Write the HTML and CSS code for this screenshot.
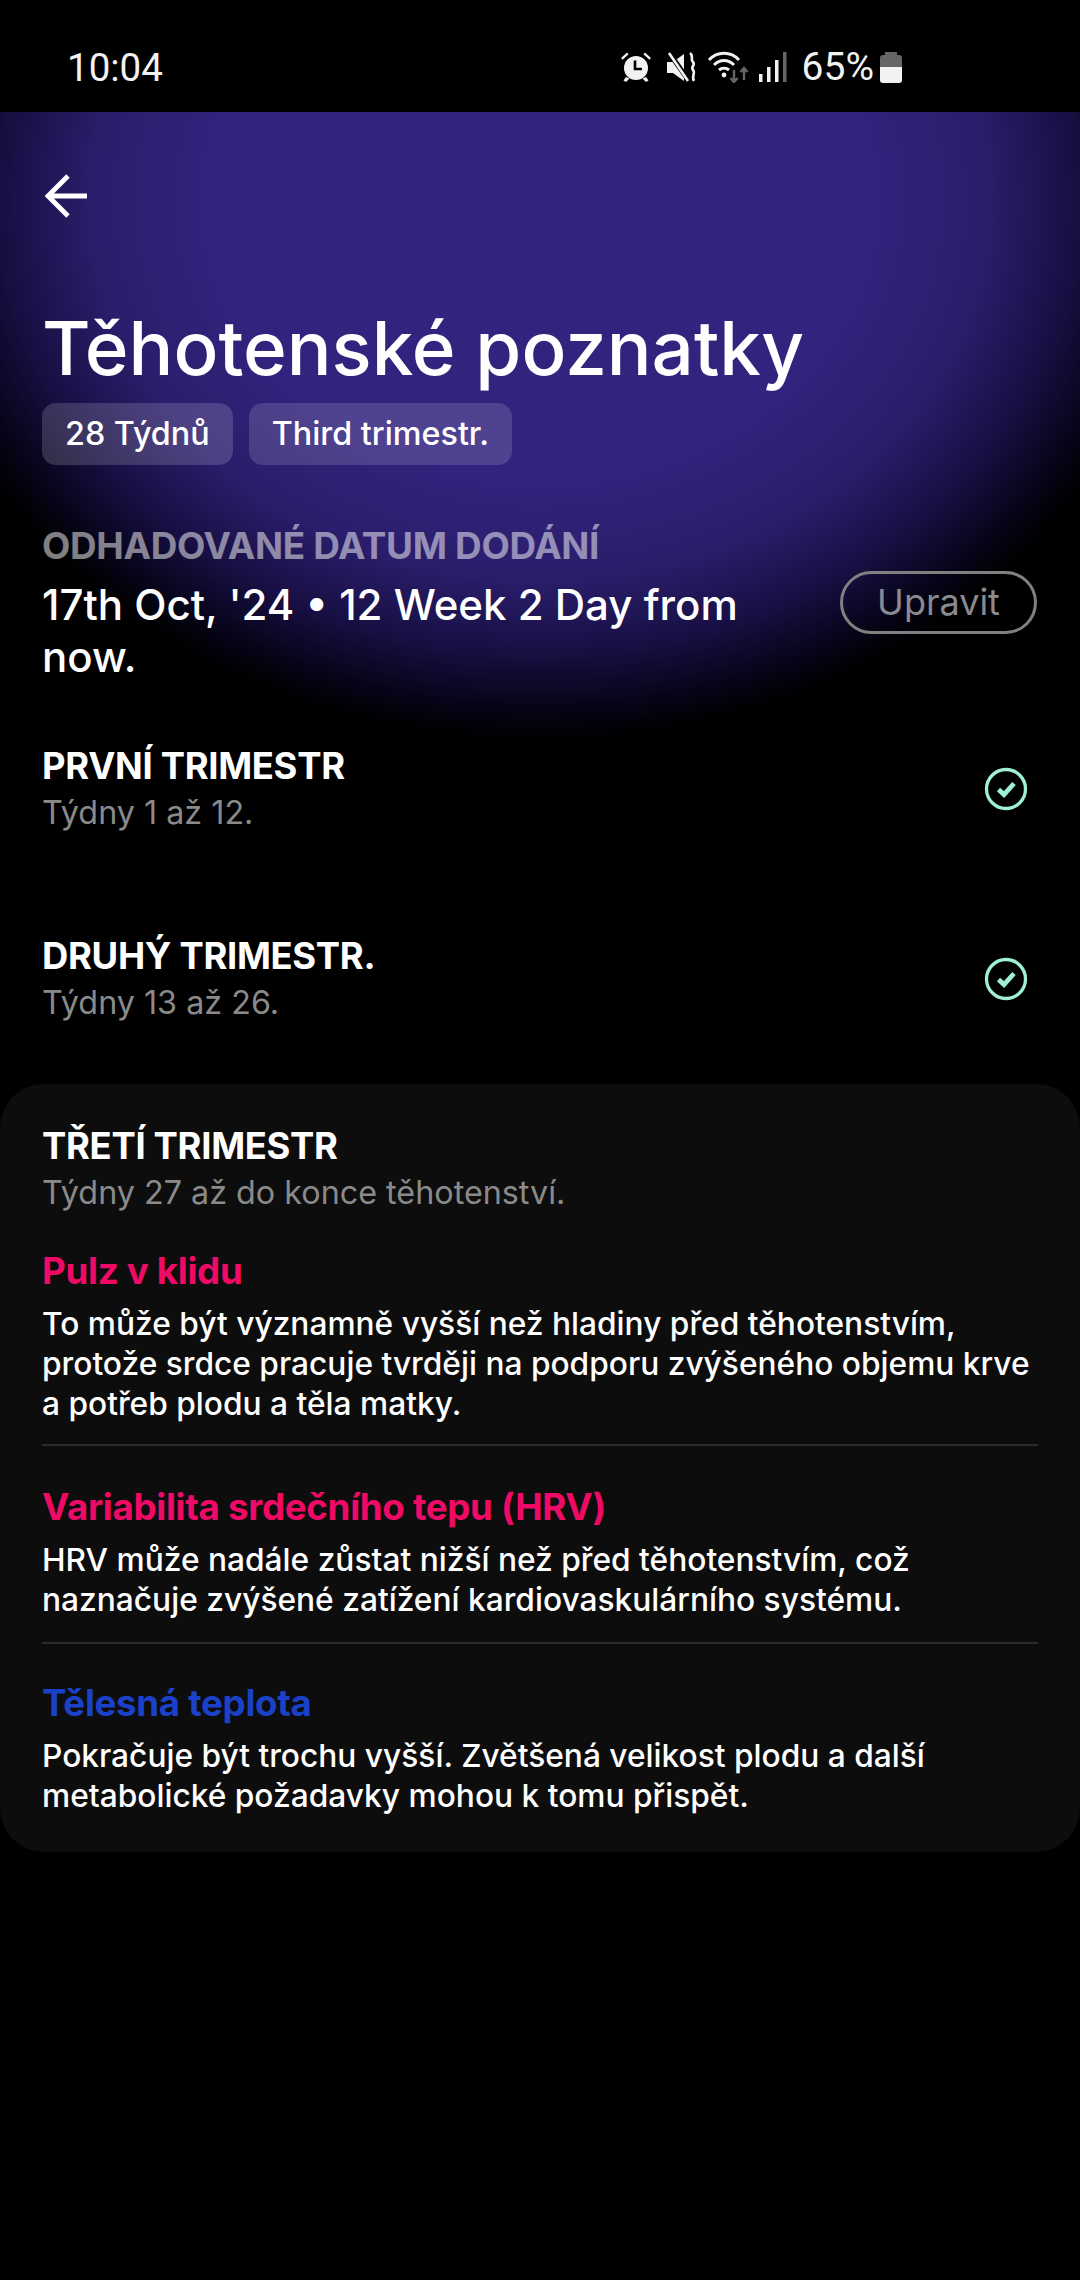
FILE: index.html
```html
<!DOCTYPE html>
<html lang="cs">
<head>
<meta charset="utf-8">
<title>Těhotenské poznatky</title>
<link rel="stylesheet" href="styles.css">
</head>
<body>
<div class="status">
  <span class="time">10:04</span>
  <div class="status-right">
    <svg class="ic ic-alarm" width="32" height="32" viewBox="0 0 32 32"><path d="M7 1.500 1 7l1.600 1.800 6-5.500zM25 1.500 31 7l-1.600 1.800-6-5.500z" fill="#f2f2f2"/><circle cx="16" cy="17" r="12" fill="#f2f2f2"/><path d="M15 9.500V18h7" fill="none" stroke="#000" stroke-width="2.600"/><path d="M6 26l-2.500 3.500 2.500 1.500 3.500-3.500zM26 26l2.500 3.500-2.500 1.500-3.500-3.500z" fill="#f2f2f2"/></svg>
    <svg class="ic" width="32" height="32" viewBox="0 0 32 32"><path d="M2 11h6L19 3v27L8 22H2z" fill="#f2f2f2"/><path d="M5 3l19 27" stroke="#000" stroke-width="5"/><path d="M4 2l19 28" stroke="#f2f2f2" stroke-width="2.600"/><path d="M25 2c4 3 0 6 3 9s-3 5 0 8 -2 6 1 11" fill="none" stroke="#f2f2f2" stroke-width="2.600"/></svg>
    <svg class="ic ic-wifi" width="44" height="32" viewBox="0 0 44 32"><path d="M2 9C10 0 24 0 32 9M7 14c6-6 14-6 20 0M12 19c3-2.500 7-2.500 10 0" fill="none" stroke="#f2f2f2" stroke-width="3"/><circle cx="17" cy="24" r="2.400" fill="#f2f2f2"/><path d="M27 19v12m-3.500-4 3.500 4 3.500-4" fill="none" stroke="#666" stroke-width="2.400"/><path d="M37 29V17m-3.500 4 3.500-4 3.500 4" fill="none" stroke="#666" stroke-width="2.400"/></svg>
    <svg class="ic" width="32" height="32" viewBox="0 0 32 32"><rect x="3" y="23" width="3.500" height="8" fill="#f2f2f2"/><rect x="11" y="16" width="3.500" height="15" fill="#f2f2f2"/><rect x="19" y="9" width="3.500" height="22" fill="#f2f2f2"/><rect x="27" y="1" width="3.500" height="30" fill="#666"/></svg>
    <span class="pct">65%</span>
    <svg class="ic" width="22" height="31" viewBox="0 0 22 31"><path d="M5 0h12v3h2a3 3 0 0 1 3 3v9H0V6a3 3 0 0 1 3-3h2z" fill="#666"/><path d="M0 15h22v13a3 3 0 0 1-3 3H3a3 3 0 0 1-3-3z" fill="#f2f2f2"/></svg>
  </div>
</div>

<header class="hero">
  <svg class="back" width="46" height="44" viewBox="0 0 46 44"><path d="M24 2 4 22l20 20M4 22h39" fill="none" stroke="#fff" stroke-width="4.800"/></svg>
  <h1 class="title">Těhotenské poznatky</h1>
  <div class="chips">
    <span class="chip chip-grey">28 Týdnů</span>
    <span class="chip chip-violet">Third trimestr.</span>
  </div>
  <div class="due-label">ODHADOVANÉ DATUM DODÁNÍ</div>
  <div class="due-row">
    <p class="due-text">17th Oct, '24 • 12 Week 2 Day from now.</p>
    <span class="edit">Upravit</span>
  </div>
</header>

<section class="tri">
  <div>
    <h2 class="tri-title">PRVNÍ TRIMESTR</h2>
    <p class="tri-sub">Týdny 1 až 12.</p>
  </div>
  <svg class="check" width="44" height="44" viewBox="0 0 44 44"><circle cx="22" cy="22" r="19.500" fill="none" stroke="#a0efd8" stroke-width="3.300"/><path d="M14.500 22.500l5.500 5L30 16.500" fill="none" stroke="#a0efd8" stroke-width="4.800"/></svg>
</section>
<section class="tri">
  <div>
    <h2 class="tri-title">DRUHÝ TRIMESTR.</h2>
    <p class="tri-sub">Týdny 13 až 26.</p>
  </div>
  <svg class="check" width="44" height="44" viewBox="0 0 44 44"><circle cx="22" cy="22" r="19.500" fill="none" stroke="#a0efd8" stroke-width="3.300"/><path d="M14.500 22.500l5.500 5L30 16.500" fill="none" stroke="#a0efd8" stroke-width="4.800"/></svg>
</section>

<section class="card">
  <h2 class="tri-title">TŘETÍ TRIMESTR</h2>
  <p class="tri-sub">Týdny 27 až do konce těhotenství.</p>
  <div class="item">
    <h3 class="item-title pink">Pulz v klidu</h3>
    <p class="item-text">To může být významně vyšší než hladiny před těhotenstvím, protože srdce pracuje tvrději na podporu zvýšeného objemu krve a potřeb plodu a těla matky.</p>
  </div>
  <div class="item">
    <h3 class="item-title pink">Variabilita srdečního tepu (HRV)</h3>
    <p class="item-text">HRV může nadále zůstat nižší než před těhotenstvím, což naznačuje zvýšené zatížení kardiovaskulárního systému.</p>
  </div>
  <div class="item">
    <h3 class="item-title blue">Tělesná teplota</h3>
    <p class="item-text">Pokračuje být trochu vyšší. Zvětšená velikost plodu a další metabolické požadavky mohou k tomu přispět.</p>
  </div>
</section>
</body>
</html>
```
FILE: styles.css
```css
* { box-sizing: border-box; margin: 0; padding: 0; }
html { background: #000; }
body {
  width: 1080px; height: 2280px; overflow: hidden;
  font-family: Inter, "Noto Sans", sans-serif; color: #fff;
  background: #000 radial-gradient(ellipse 640px 540px at 540px 200px, #33237f 0%, #33237f 50%, #2a1d6b 70%, #170f42 84%, #060418 94%, #000 100%) no-repeat;
}

.status { height: 112px; background: #000; display: flex; justify-content: space-between; align-items: center; padding: 22px 178px 0 67px; font-family: Roboto, sans-serif; color: #f2f2f2; }
.time { font-size: 38.500px; }
.status-right { display: flex; align-items: center; gap: 10px; }
.ic { display: block; }
.ic-alarm { margin-right: 3px; }
.ic-wifi { margin-right: -5px; }
.pct { font-size: 39px; margin: 0 -4px 0 4px; }

.hero { height: 582px; padding: 62px 44px 0; }
.back { display: block; }
.title { font-size: 74.500px; font-weight: 500; line-height: 88px; margin-top: 86px; margin-left: -2px; }
.chips { display: flex; gap: 16px; margin-top: 11px; margin-left: -2px; }
.chip { height: 62px; padding: 0 23px; border-radius: 14px; font-size: 32.300px; line-height: 62px; font-weight: 500; }
.chip-grey { background: rgba(255,255,255,.16); }
.chip-violet { background: rgba(255,255,255,.14); }
.due-label { margin-left: -2px; font-size: 36.800px; font-weight: 700; line-height: 42px; margin-top: 60px; color: rgba(255,255,255,.5); letter-spacing: -.3px; }
.due-row { display: flex; justify-content: space-between; align-items: flex-start; margin-top: 12px; }
.due-text { margin-left: -2px; width: 760px; font-size: 42px; font-weight: 500; line-height: 52px; }
.edit { width: 197px; height: 63px; margin-right: -1px; border: 3px solid #808080; border-radius: 32px; font-size: 36px; line-height: 57px; text-align: center; color: #8a8a90; margin-top: -8px; }

.tri { display: flex; justify-content: space-between; align-items: center; height: 190px; padding: 0 52px 0 42px; }
.tri-title { font-size: 36.400px; font-weight: 700; line-height: 44px; letter-spacing: -.3px; }
.tri-sub { font-size: 32.300px; line-height: 44px; color: #8a8a8a; margin-top: 3px; }
.check { display: block; }

.card { margin-top: 10px; height: 768px; padding: 40px 42px 0; background: #0d0d0d; border-radius: 44px; }
.item { padding: 39px 0 22px; border-bottom: 2px solid #2c2c2c; }
.item:last-child { border-bottom: 0; padding-top: 37px; }
.item:first-of-type { padding: 34px 0 20px; }
.item-title { font-size: 36.700px; font-weight: 700; line-height: 44px; letter-spacing: -.3px; margin-bottom: 11px; }
.pink { color: #ee0a65; }
.blue { color: #1b41c8; }
.item-text { font-size: 31.700px; font-weight: 500; line-height: 40px; }
```
